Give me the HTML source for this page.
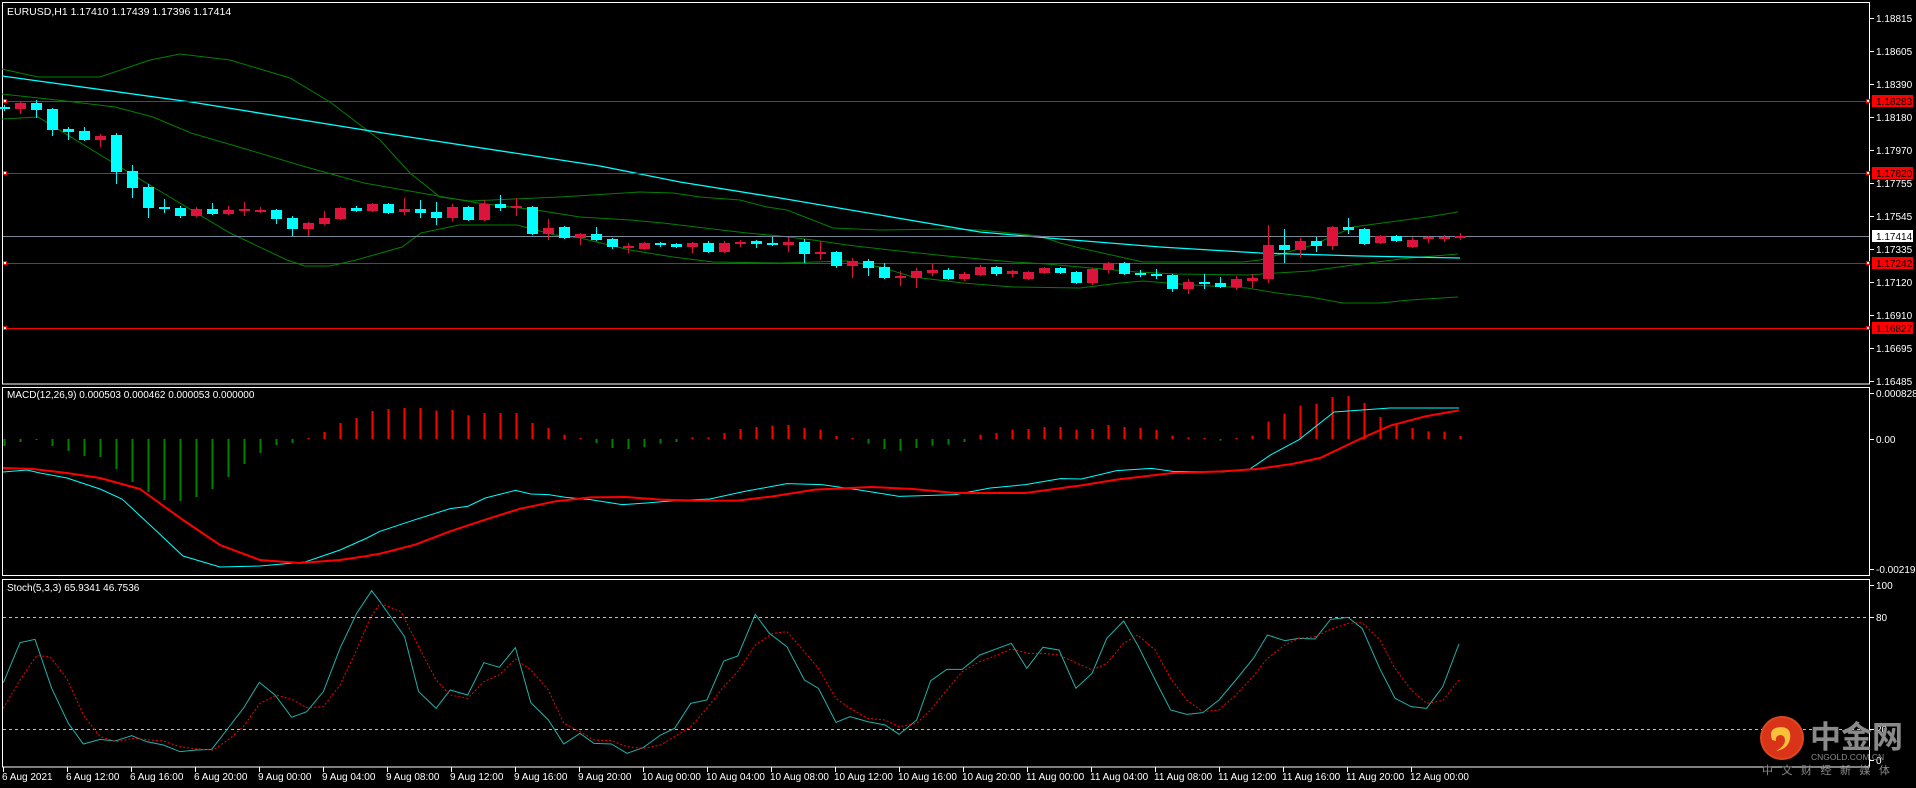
<!DOCTYPE html>
<html><head><meta charset="utf-8"><style>
html,body{margin:0;padding:0;background:#000;width:1916px;height:788px;overflow:hidden}
svg{display:block}
text{font-family:"Liberation Sans","DejaVu Sans",sans-serif;font-size:10px;fill:#fff}
</style></head><body>
<svg id="s" width="1916" height="788" xmlns="http://www.w3.org/2000/svg">
<rect width="1916" height="788" fill="#000"/>
<g id="g"></g>
<text x="7" y="15" style="font-size:10.5px">EURUSD,H1  1.17410 1.17439 1.17396 1.17414</text>
<text x="7" y="398" style="font-size:10px">MACD(12,26,9) 0.000503 0.000462 0.000053 0.000000</text>
<text x="7" y="591" style="font-size:10px">Stoch(5,3,3) 65.9341 46.7536</text>
<g id="logo">
<circle cx="1782" cy="738" r="22" fill="#e0461c"/>
<circle cx="1782" cy="738" r="20" fill="#d9341a"/>
<path d="M1772 740 q-4 -12 8 -13 q12 0 10 12 q-2 10 -14 12 q8 -4 9 -10 q0 -6 -5 -6 q-5 1 -4 6 z" fill="#f7c23a"/>
<text x="1810" y="748" style="font-size:31px;fill:#8a8a8a;font-family:'Noto Sans CJK SC',sans-serif;font-weight:bold">中金网</text>
<text x="1811" y="760" style="font-size:8.5px;fill:#8a8a8a">CNGOLD.COM.CN</text>
<text x="1762" y="774" style="font-size:11px;fill:#8a8a8a;font-family:'Noto Sans CJK SC',sans-serif;letter-spacing:8.5px">中文财经新媒体</text>
</g>
</svg>
<script>
var NS="http://www.w3.org/2000/svg",G=document.getElementById('g');
function el(t,a,p){var e=document.createElementNS(NS,t);for(var k in a)e.setAttribute(k,a[k]);(p||G).appendChild(e);return e;}
function pl(pts,c,w,d){var a={points:pts.map(function(p){return p[0]+','+p[1]}).join(' '),fill:'none',stroke:c,'stroke-width':w||1};if(d)a['stroke-dasharray']=d;el('polyline',a);}
function cx(i){return 3.5+16*i;}
// frames
var W='#fff';
el('rect',{x:2.5,y:2.5,width:1867,height:381.5,fill:'none',stroke:W});
el('rect',{x:2.5,y:387.5,width:1867,height:188,fill:'none',stroke:W});
el('rect',{x:2.5,y:579.5,width:1867,height:187.5,fill:'none',stroke:W});
// price axis
var pa=[["1.18815",18],["1.18605",51],["1.18390",84],["1.18180",117],["1.17970",150],["1.17755",183],["1.17545",216],["1.17335",249],["1.17120",282],["1.16910",315],["1.16695",348],["1.16485",381]];
pa.forEach(function(p){el('line',{x1:1870,x2:1874,y1:p[1]+.5,y2:p[1]+.5,stroke:W});var t=el('text',{x:1876,y:p[1]+4});t.textContent=p[0];});
// bands/MA
pl([[2,69],[38,77],[100,77],[150,60],[180,54],[230,60],[290,78],[330,102],[380,140],[410,173],[440,197],[470,201],[560,197],[640,192],[673,193],[700,197],[740,200],[767,207],[787,210],[833,228],[880,230],[947,229],[980,230],[1010,233],[1040,236],[1060,243],[1080,248],[1143,262],[1243,262],[1260,260],[1313,245],[1353,227],[1427,217],[1458,212]],'#008000');
pl([[2,94],[57,100],[115,107],[153,117],[191,133],[249,150],[306,167],[364,183],[421,193],[478,203],[536,210],[580,217],[630,220],[663,223],[713,229],[747,233],[780,236],[813,240],[847,245],[890,250],[947,256],[1013,262],[1047,264],[1080,267],[1137,272],[1177,274],[1247,275],[1277,273],[1310,271],[1353,265],[1393,260],[1410,258],[1458,254]],'#008000');
pl([[2,119],[38,117],[153,187],[230,233],[287,260],[305,266],[330,266],[356,260],[402,247],[421,233],[459,225],[517,225],[555,235],[580,238],[630,250],[673,257],[713,262],[780,263],[847,261],[880,267],[913,277],[963,283],[1013,287],[1080,288],[1120,283],[1143,281],[1193,285],[1247,288],[1277,293],[1310,297],[1343,303],[1380,303],[1410,300],[1458,297]],'#008000');
pl([[2,76],[191,102],[383,133],[600,166],[680,182],[780,198],[880,215],[980,232],[1060,239],[1160,247],[1260,253],[1360,256],[1460,258]],'#00ffff',1.3);
// horizontal lines
el('line',{x1:3,x2:1869,y1:236.5,y2:236.5,stroke:'#778899'});
[[101,"1.18283"],[173,"1.17820"],[263,"1.17242"],[328,"1.16827"]].forEach(function(h){
 el('line',{x1:3,x2:1869,y1:h[0]+.5,y2:h[0]+.5,stroke:'#ff0000'});
 el('rect',{x:3.5,y:h[0]-1.5,width:3,height:3,fill:'#fff',stroke:'#f00'});
 el('rect',{x:1866.5,y:h[0]-1.5,width:3,height:3,fill:'#fff',stroke:'#f00'});
 el('rect',{x:1872,y:h[0]-6,width:41,height:12,fill:'#ff0000'});
 var t=el('text',{x:1876,y:h[0]+4,style:'fill:#000'});t.textContent=h[1];
});
el('rect',{x:1872,y:230,width:41,height:12,fill:'#fff'});
var t=el('text',{x:1876,y:240,style:'fill:#000'});t.textContent="1.17414";
// candles
var C="c 107 109 105 111|r 103 109 102 114|c 103 110 100 118|c 109 130 108 136|c 129 132 127 140|c 131 140 127 141|r 136 140 134 147|c 135 172 133 184|c 171 188 165 198|c 187 208 184 218|c 207 209 199 213|c 208 216 206 218|r 209 216 207 217|c 209 214 203 215|r 210 214 206 215|r 209 211 202 216|r 210 212 207 213|c 210 219 209 224|c 218 229 216 236|r 223 229 222 236|r 218 224 211 225|r 208 219 207 220|c 208 211 206 212|r 204 211 203 212|c 204 213 203 214|r 209 212 198 215|c 209 213 200 218|c 212 218 202 225|r 207 218 204 221|c 207 220 206 221|r 204 220 200 221|c 204 208 195 211|r 206 208 198 216|c 207 234 206 235|r 228 234 219 240|c 227 238 226 239|r 234 238 233 245|c 234 240 227 241|c 239 247 238 249|r 246 248 243 253|r 243 249 242 250|c 243 245 242 247|c 244 247 243 248|r 243 247 242 253|c 243 252 241 253|r 243 252 241 253|r 242 244 240 247|c 241 244 240 248|c 243 245 237 246|r 242 245 237 252|c 242 254 239 263|r 252 254 241 260|c 252 266 251 268|r 261 266 258 278|c 261 268 259 276|c 267 278 263 279|r 276 278 271 286|r 271 278 268 288|r 270 273 264 276|c 270 279 268 280|r 274 279 272 281|r 267 275 265 276|c 267 274 266 276|r 271 274 270 277|r 272 279 271 280|r 268 273 267 274|c 268 273 267 274|c 272 283 271 284|r 269 283 268 285|r 263 270 262 273|c 263 274 262 275|c 273 275 270 277|c 274 276 269 279|c 275 289 274 292|r 282 289 279 294|c 282 284 274 289|c 283 287 277 288|r 279 287 276 290|r 278 281 274 288|r 245 279 225 283|c 245 250 229 263|r 241 250 238 257|c 241 246 237 252|r 227 246 226 250|c 227 230 218 234|c 229 244 228 245|r 236 243 235 244|c 236 241 235 242|r 240 247 237 248|r 237 239 236 243|r 237 238 235 242|r 236 238 233 240".split('|');
C.forEach(function(s,i){var a=s.split(' '),col=a[0]=='c'?'#00ffff':'#dc143c',bt=+a[1],bb=+a[2],wt=+a[3],wb=+a[4],x=Math.round(cx(i));
 el('rect',{x:x,y:wt,width:1,height:wb-wt,fill:col});
 var h=Math.max(2,bb-bt);el('rect',{x:x-5,y:bt,width:11,height:h,fill:col});});
// MACD axis
[["0.000828",393],["0.00",439],["-0.002192",569]].forEach(function(p){el('line',{x1:1870,x2:1874,y1:p[1]+.5,y2:p[1]+.5,stroke:W});var t=el('text',{x:1876,y:p[1]+4});t.textContent=p[0];});
var H=[446,442,440,446,451,456,457,469,482,492,500,501,497,489,477,464,453,445,443,438,432,423,418,411];
[63,60,60,68,66,82,75,75,75,105,120,140,153,165,180,183,177,167,162,148,148,135,123,117,113,111,120,125,144,153,167,183,189,180,173,170,162,140,135,125,123,117,117,125,123,111,117,119,126,143,148,151,158,155,143,101,77,53,47,27,24,45,87,107,120,130,131,144].forEach(function(Y){H.push(388+Y/3);});
H.forEach(function(y,i){var x=Math.round(cx(i))-0.5,z=439;if(Math.abs(y-z)<1)y=z-1;
 el('rect',{x:x,y:Math.min(y,z),width:2,height:Math.abs(y-z),fill:y>z?'#008000':'#ff0000'});});
function z9(a){return a.map(function(p){return [380+p[0]/1.4255,388+p[1]/3];});}
var mc=[[3,472],[27,470],[40,473],[67,478],[100,489],[122,499],[150,525],[183,556],[220,567],[260,566],[305,562],[340,550],[367,538]].concat(z9([[0,430],[50,395],[100,362],[125,355],[150,330],[193,307],[215,318],[240,320],[265,328],[300,335],[345,350],[380,345],[420,338],[470,333],[520,310],[580,287],[630,290],[680,305],[740,325],[820,320],[870,300],[920,290],[970,272],[1000,273],[1050,248],[1100,241],[1130,250],[1200,252],[1240,243],[1270,200],[1310,155],[1360,72],[1440,60],[1538,60]]));
var ms=[[3,468],[33,469],[67,473],[100,478],[140,489],[183,520],[220,545],[260,560],[300,563],[340,560],[367,556]].concat(z9([[0,497],[50,470],[100,430],[150,395],[200,362],[250,340],[300,328],[350,327],[400,335],[450,338],[510,338],[560,325],[620,305],[700,297],[760,303],[820,315],[920,315],[1000,292],[1050,275],[1130,255],[1200,250],[1250,243],[1300,228],[1340,210],[1400,150],[1440,113],[1490,85],[1538,67]]));
pl(mc,'#00ffff',1);pl(ms,'#ff0000',2);
// Stoch
[["100",585],["80",617],["20",729],["0",760]].forEach(function(p){el('line',{x1:1870,x2:1874,y1:p[1]+.5,y2:p[1]+.5,stroke:W});var t=el('text',{x:1876,y:p[1]+4});t.textContent=p[0];});
el('line',{x1:3,x2:1869,y1:617.5,y2:617.5,stroke:'#c0c0c0','stroke-dasharray':'3,3'});
el('line',{x1:3,x2:1869,y1:729.5,y2:729.5,stroke:'#c0c0c0','stroke-dasharray':'3,3'});
function z5(a){return a.map(function(p){return [p[0]/3,560+p[1]/3];});}
function z10(a){return a.map(function(p){return [380+p[0]/1.4255,580+p[1]/3];});}
var sk=z5([[10,368],[60,248],[105,238],[155,385],[205,490],[250,552],[300,538],[345,543],[395,527],[440,545],[490,555],[540,575],[590,570],[635,568],[680,510],[730,445],[778,367],[825,405],[875,472],[920,455],[970,395],[1020,265],[1070,160],[1115,92]]).concat(z10([[0,65],[35,170],[55,335],[80,385],[100,330],[125,345],[148,248],[170,262],[193,203],[215,368],[240,420],[262,492],[285,460],[305,490],[330,492],[352,520],[375,503],[400,465],[420,445],[443,370],[466,360],[490,243],[510,228],[535,103],[555,160],[580,200],[605,300],[625,325],[650,427],[670,410],[695,425],[720,435],[740,463],[765,420],[785,302],[808,268],[830,268],[855,225],[900,190],[922,265],[945,202],[968,210],[992,325],[1015,280],[1036,175],[1060,123],[1080,195],[1105,300],[1127,390],[1150,403],[1173,398],[1196,360],[1220,300],[1245,235],[1265,165],[1290,182],[1310,175],[1333,177],[1355,118],[1380,112],[1400,145],[1425,265],[1447,355],[1470,380],[1492,385],[1515,320],[1538,192]]));
var sd=z5([[10,445],[60,360],[110,287],[150,290],[200,355],[250,465],[300,530],[350,545],[400,535],[450,540],[490,543],[540,560],[590,567],[640,570],[690,535],[730,500],[780,430],[830,405],[880,420],[920,443],[970,440],[1020,375],[1070,270],[1110,175]]).concat(z10([[0,70],[30,95],[55,200],[80,300],[100,345],[125,355],[148,305],[170,285],[193,237],[215,270],[240,330],[262,430],[285,455],[305,480],[330,482],[352,500],[375,505],[400,495],[420,470],[443,440],[466,385],[490,320],[510,275],[535,195],[560,160],[580,155],[605,215],[625,265],[650,355],[670,385],[695,415],[720,420],[740,440],[765,430],[785,390],[808,330],[830,275],[855,245],[880,225],[900,207],[922,220],[945,220],[968,225],[992,248],[1015,270],[1036,250],[1060,190],[1080,165],[1105,210],[1127,295],[1150,360],[1173,395],[1196,390],[1220,345],[1245,288],[1265,235],[1290,195],[1310,175],[1333,170],[1355,148],[1380,130],[1400,128],[1425,180],[1447,265],[1470,330],[1492,370],[1515,362],[1538,300]]));
pl(sk,'#20b2aa',1);pl(sd,'#ff0000',1,'2,2');
// time axis
var T=["6 Aug 2021","6 Aug 12:00","6 Aug 16:00","6 Aug 20:00","9 Aug 00:00","9 Aug 04:00","9 Aug 08:00","9 Aug 12:00","9 Aug 16:00","9 Aug 20:00","10 Aug 00:00","10 Aug 04:00","10 Aug 08:00","10 Aug 12:00","10 Aug 16:00","10 Aug 20:00","11 Aug 00:00","11 Aug 04:00","11 Aug 08:00","11 Aug 12:00","11 Aug 16:00","11 Aug 20:00","12 Aug 00:00"];
T.forEach(function(s,k){var x=3+64*k;el('line',{x1:x+.5,x2:x+.5,y1:767,y2:772,stroke:W});var t=el('text',{x:x-1,y:780});t.textContent=s;});
document.getElementById('s').appendChild(document.getElementById('logo'));
</script>
</body></html>
